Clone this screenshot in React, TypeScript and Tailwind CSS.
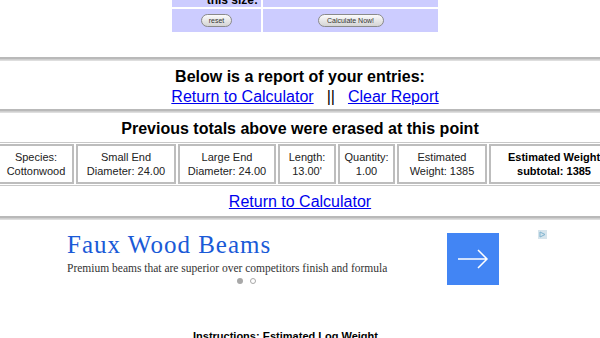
const cells = [
  { w: 'w-[76px] -ml-[2px]', a: 'Species:', b: 'Cottonwood' },
  { w: 'w-[100px]', a: 'Small End', b: 'Diameter: 24.00' },
  { w: 'w-[98px]', a: 'Large End', b: 'Diameter: 24.00' },
  { w: 'w-[58px]', a: 'Length:', b: "13.00'" },
  { w: 'w-[57px]', a: 'Quantity:', b: '1.00' },
  { w: 'w-[90px]', a: 'Estimated', b: 'Weight: 1385' },
];

const Rule = () => (
  <div className="w-full h-[4px] border-t-2 border-[#b9b9b9] border-b border-b-[#dedede] bg-[#cfcfcf]" />
);

const PillButton = ({ label, w }: { label: string; w: string }) => (
  <span
    className={`${w} h-[13px] rounded-full border border-[#8a8a8a] bg-gradient-to-b from-[#fbfbfb] to-[#d4d4d4] text-[7px] leading-[11px] text-[#333] text-center`}
  >
    {label}
  </span>
);

export default function App() {
  return (
    <div className="w-[600px] h-[338px] overflow-hidden bg-white font-['Liberation_Sans',Arial,sans-serif] text-black">
      {/* calculator form, scrolled off the top */}
      <div className="ml-[172px] w-[266px] -mt-[12px] flex flex-col gap-[2px]">
        <div className="flex gap-[2px] h-[19px]">
          <div className="w-[89px] bg-[#ccccff] flex items-end justify-end pr-[3px] text-[12px] font-bold leading-[14px]">
            this size:
          </div>
          <div className="flex-1 bg-[#ccccff]" />
        </div>
        <div className="flex gap-[2px] h-[23px]">
          <div className="w-[89px] bg-[#ccccff] flex items-center justify-center">
            <PillButton label="reset" w="w-[31px]" />
          </div>
          <div className="flex-1 bg-[#ccccff] flex items-center justify-center">
            <PillButton label="Calculate Now!" w="w-[66px]" />
          </div>
        </div>
      </div>

      <div className="mt-[25px]">
        <Rule />
      </div>

      <div className="flex flex-col items-center pt-[6px] pb-[3px]">
        <div className="text-[16px] font-bold leading-[19px]">Below is a report of your entries:</div>
        <div className="text-[16px] leading-[19px] mt-[1px] pl-[10px]">
          <a className="text-[#0000ee] underline" href="#">Return to Calculator</a>
          <span className="mx-[13px]">||</span>
          <a className="text-[#0000ee] underline" href="#">Clear Report</a>
        </div>
      </div>

      <Rule />

      <div className="text-center text-[16px] font-bold leading-[19px] pt-[6px] pb-[4px]">
        Previous totals above were erased at this point
      </div>

      <div className="w-full border-y border-[#c8c8c8] py-[1px] overflow-hidden">
        <div className="flex gap-[2px] w-[640px] text-[11px] leading-[14px] text-[#222]">
          {cells.map((c) => (
            <div
              key={c.a}
              className={`${c.w} shrink-0 h-[40px] border-2 border-[#bdbdbd] flex flex-col items-center justify-center text-center`}
            >
              <span>{c.a}</span>
              <span>{c.b}</span>
            </div>
          ))}
          <div className="w-[130px] shrink-0 h-[40px] border-2 border-[#bdbdbd] flex flex-col items-center justify-center font-bold text-black">
            <span>Estimated Weight</span>
            <span>subtotal: 1385</span>
          </div>
        </div>
      </div>

      <div className="text-center text-[16px] leading-[19px] pt-[6px] pb-[5px]">
        <a className="text-[#0000ee] underline" href="#">Return to Calculator</a>
      </div>

      <Rule />

      {/* ad unit */}
      <div className="relative h-[90px] flex items-start pl-[67px] pt-[11px]">
        <div className="flex flex-col w-[360px]">
          <div className="font-['Liberation_Serif',serif] text-[25px] leading-[28px] tracking-[1px] text-[#1a5ad7]">
            Faux Wood Beams
          </div>
          <div className="font-['Liberation_Serif',serif] text-[11.5px] leading-[14px] text-[#333] mt-[2px] whitespace-nowrap">
            Premium beams that are superior over competitors finish and formula
          </div>
          <div className="flex gap-[7px] ml-[170px] mt-[3px]">
            <span className="w-[6px] h-[6px] rounded-full bg-[#a8a8a8]" />
            <span className="w-[6px] h-[6px] rounded-full border border-[#a8a8a8]" />
          </div>
        </div>
        <div className="ml-[20px] mt-[2px] w-[52px] h-[52px] bg-[#4285f4] flex items-center justify-center">
          <svg width="32" height="20" viewBox="0 0 32 20" fill="none" stroke="white" strokeWidth="1.5">
            <path d="M1 10h29M21 1l9 9-9 9" />
          </svg>
        </div>
        <div className="absolute left-[538px] top-[10px] w-[9px] h-[9px] bg-[#d6e4ec] flex items-center justify-center">
          <svg width="7" height="7" viewBox="0 0 7 7">
            <path d="M1 1l5 2.5L1 6z" fill="none" stroke="#7fb3cf" strokeWidth="1" />
          </svg>
        </div>
      </div>

      <div className="pl-[193px] pt-[19px] text-[11px] font-bold leading-[14px]">
        Instructions: Estimated Log Weight
      </div>
    </div>
  );
}
